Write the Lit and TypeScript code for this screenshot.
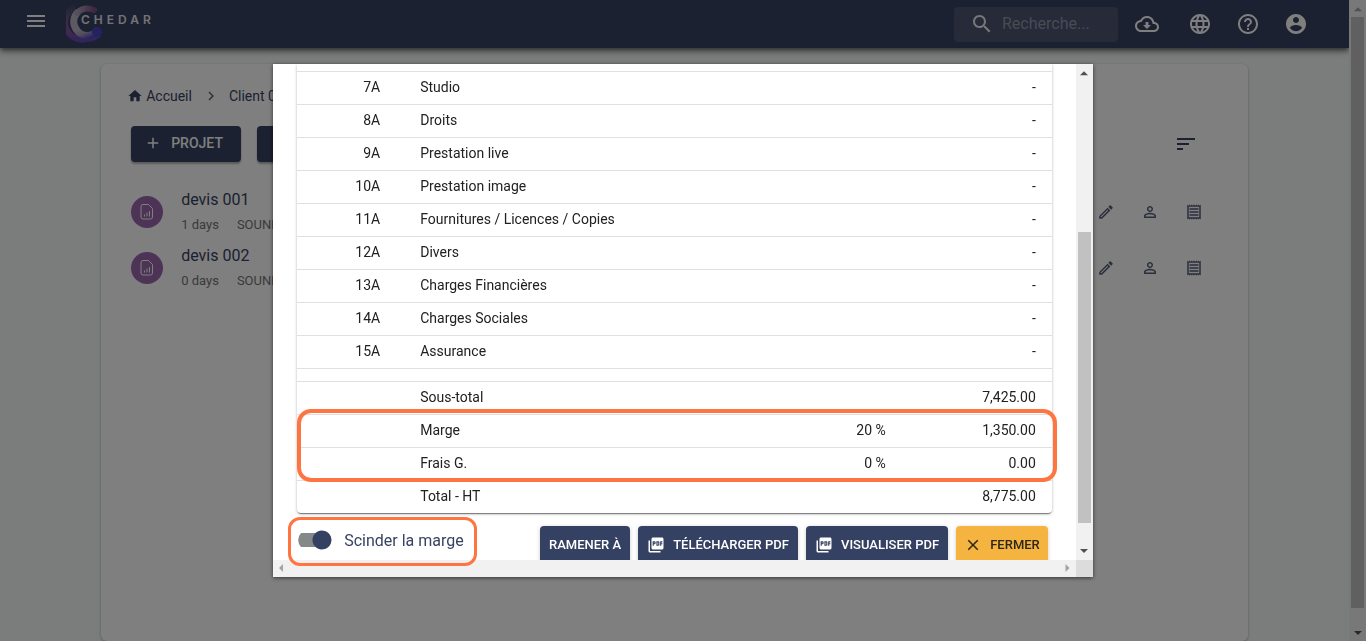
import { LitElement, html, css, svg } from "lit";
import { customElement, property } from "lit/decorators.js";

const ICONS: Record<string, string> = {
  menu: "M3,6H21V8H3V6M3,11H21V13H3V11M3,16H21V18H3V16Z",
  search: "M15.5 14h-.79l-.28-.27C15.41 12.59 16 11.11 16 9.5 16 5.91 13.09 3 9.5 3S3 5.91 3 9.5 5.91 16 9.5 16c1.61 0 3.09-.59 4.23-1.57l.27.28v.79l5 4.99L20.49 19l-4.99-5zm-6 0C7.01 14 5 11.99 5 9.5S7.01 5 9.5 5 14 7.01 14 9.5 11.99 14 9.5 14z",
  cloud: "M19.35 10.04C18.67 6.59 15.64 4 12 4 9.11 4 6.6 5.64 5.35 8.04 2.34 8.36 0 10.91 0 14c0 3.31 2.69 6 6 6h13c2.76 0 5-2.24 5-5 0-2.64-2.05-4.78-4.65-4.96zM19 18H6c-2.21 0-4-1.79-4-4 0-2.05 1.53-3.76 3.56-3.97l1.07-.11.5-.95C8.08 7.14 9.94 6 12 6c2.62 0 4.88 1.86 5.39 4.43l.3 1.5 1.53.11c1.56.1 2.78 1.41 2.78 2.96 0 1.65-1.35 3-3 3zm-5.55-8h-2.9v3H8l4 4 4-4h-2.55z",
  globe: "M11.99 2C6.47 2 2 6.48 2 12s4.47 10 9.99 10C17.52 22 22 17.52 22 12S17.52 2 11.99 2zm6.93 6h-2.95c-.32-1.25-.78-2.45-1.38-3.56 1.84.63 3.37 1.91 4.33 3.56zM12 4.04c.83 1.2 1.48 2.53 1.91 3.96h-3.82c.43-1.43 1.08-2.76 1.91-3.96zM4.26 14C4.1 13.36 4 12.69 4 12s.1-1.36.26-2h3.38c-.08.66-.14 1.32-.14 2s.06 1.34.14 2H4.26zm.82 2h2.95c.32 1.25.78 2.45 1.38 3.56-1.84-.63-3.37-1.9-4.33-3.56zm2.95-8H5.08c.96-1.66 2.49-2.93 4.33-3.56C8.81 5.55 8.35 6.75 8.03 8zM12 19.96c-.83-1.2-1.48-2.53-1.91-3.96h3.82c-.43 1.43-1.08 2.76-1.91 3.96zM14.34 14H9.66c-.09-.66-.16-1.32-.16-2s.07-1.35.16-2h4.68c.09.65.16 1.32.16 2s-.07 1.34-.16 2zm.25 5.56c.6-1.11 1.06-2.31 1.38-3.56h2.95c-.96 1.65-2.49 2.93-4.33 3.56zM16.36 14c.08-.66.14-1.32.14-2s-.06-1.34-.14-2h3.38c.16.64.26 1.31.26 2s-.1 1.36-.26 2h-3.38z",
  help: "M11 18h2v-2h-2v2zm1-16C6.48 2 2 6.48 2 12s4.48 10 10 10 10-4.48 10-10S17.52 2 12 2zm0 18c-4.41 0-8-3.59-8-8s3.59-8 8-8 8 3.59 8 8-3.59 8-8 8zm0-14c-2.21 0-4 1.79-4 4h2c0-1.1.9-2 2-2s2 .9 2 2c0 2-3 1.75-3 5h2c0-2.25 3-2.5 3-5 0-2.21-1.79-4-4-4z",
  account: "M12 2C6.48 2 2 6.48 2 12s4.48 10 10 10 10-4.48 10-10S17.52 2 12 2zm0 3c1.66 0 3 1.34 3 3s-1.34 3-3 3-3-1.34-3-3 1.34-3 3-3zm0 14.2c-2.5 0-4.71-1.28-6-3.22.03-1.99 4-3.08 6-3.08 1.99 0 5.97 1.09 6 3.08-1.29 1.94-3.5 3.22-6 3.22z",
  home: "M10 20v-6h4v6h5v-8h3L12 3 2 12h3v8z",
  chevron: "M10 6L8.59 7.41 13.17 12l-4.58 4.59L10 18l6-6z",
  add: "M19 13h-6v6h-2v-6H5v-2h6V5h2v6h6v2z",
  sort: "M3 18h6v-2H3v2zM3 6v2h18V6H3zm0 7h12v-2H3v2z",
  edit: "M14.06 9.02l.92.92L5.92 19H5v-.92l9.06-9.06M17.66 3c-.25 0-.51.1-.7.29l-1.83 1.83 3.75 3.75 1.83-1.83c.39-.39.39-1.02 0-1.41l-2.34-2.34c-.2-.2-.45-.29-.71-.29zm-3.6 3.19L3 17.25V21h3.75L17.81 9.94l-3.75-3.75z",
  person: "M12 5.9c1.16 0 2.1.94 2.1 2.1s-.94 2.1-2.1 2.1S9.9 9.16 9.9 8s.94-2.1 2.1-2.1m0 9c2.97 0 6.1 1.46 6.1 2.1v1.1H5.9V17c0-.64 3.13-2.1 6.1-2.1M12 4C9.79 4 8 5.79 8 8s1.79 4 4 4 4-1.79 4-4-1.79-4-4-4zm0 9c-2.67 0-8 1.34-8 4v3h16v-3c0-2.66-5.33-4-8-4z",
  receipt: "M19.5 3.5L18 2l-1.5 1.5L15 2l-1.5 1.5L12 2l-1.5 1.5L9 2 7.5 3.5 6 2 4.5 3.5 3 2v20l1.5-1.5L6 22l1.5-1.5L9 22l1.5-1.5L12 22l1.5-1.5L15 22l1.5-1.5L18 22l1.5-1.5L21 22V2l-1.5 1.5zM19 19.09H5V4.91h14v14.18zM6 15h12v2H6zm0-4h12v2H6zm0-4h12v2H6z",
  pdf: "M20 2H8c-1.1 0-2 .9-2 2v12c0 1.1.9 2 2 2h12c1.1 0 2-.9 2-2V4c0-1.1-.9-2-2-2zm-8.5 7.5c0 .83-.67 1.5-1.5 1.5H9v2H7.5V7H10c.83 0 1.5.67 1.5 1.5v1zm5 2c0 .83-.67 1.5-1.5 1.5h-2.5V7H15c.83 0 1.5.67 1.5 1.5v3zm4-3H19v1h1.5V11H19v2h-1.5V7h3v1.5zM9 9.5h1v-1H9v1zM4 6H2v14c0 1.1.9 2 2 2h14v-2H4V6zm10 5.5h1v-3h-1v3z",
  close: "M19 6.41L17.59 5 12 10.59 6.41 5 5 6.41 10.59 12 5 17.59 6.41 19 12 13.41 17.59 19 19 17.59 13.41 12z",
  up: "M12 8.500L20 16.500H4z",
  down: "M12 16L4 8h16z",
  left: "M6 12L14 4v16z",
  right: "M17 12L9 4v16z",
};

const icon = (name: string, size = 24) => html`<svg
  width=${size} height=${size} viewBox="0 0 24 24" fill="currentColor" aria-hidden="true"
>${svg`<path d=${ICONS[name]}></path>`}</svg>`;

const base = css`
  * { box-sizing: border-box; }
  svg { display: block; flex: none; }
  button {
    font: inherit;
    color: inherit;
    border: 0;
    padding: 0;
    background: none;
    display: flex;
    align-items: center;
    justify-content: center;
  }
  a { color: inherit; text-decoration: none; }
`;

@customElement("scroll-bar")
export class ScrollBar extends LitElement {
  @property({ type: Boolean, reflect: true }) horizontal = false;
  /** Shares of the track that lie before, on and after the thumb. */
  @property({ type: Array }) parts: number[] = [];
  @property({ type: Boolean }) atStart = false;

  static styles = [base, css`
    :host { display: flex; flex-direction: column; width: 17px; background: #f1f1f1; color: #505050; }
    :host([horizontal]) { flex-direction: row; width: auto; height: 17px; color: #a3a3a3; }
    .arrow { width: 17px; height: 17px; flex: none; display: flex; align-items: center; justify-content: center; }
    .faint { color: #a3a3a3; }
    .track { flex: 1; display: flex; flex-direction: column; padding: 0 2px; }
    .thumb { background: #c1c1c1; }
  `];

  render() {
    const [before, thumb, after] = this.parts;
    return html`
      <span class="arrow ${this.atStart ? "faint" : ""}">${icon(this.horizontal ? "left" : "up", 12)}</span>
      <div class="track">
        ${this.parts.length
          ? html`<div style="flex:${before}"></div><div class="thumb" style="flex:${thumb}"></div><div style="flex:${after}"></div>`
          : ""}
      </div>
      <span class="arrow">${icon(this.horizontal ? "right" : "down", 12)}</span>
    `;
  }
}

@customElement("app-header")
export class AppHeader extends LitElement {
  static styles = [base, css`
    :host {
      display: flex;
      align-items: center;
      height: 48px;
      padding: 0 41px 0 24px;
      background: #384262;
      color: #fff;
      box-shadow: 0 2px 4px -1px rgba(0,0,0,.4), 0 4px 5px rgba(0,0,0,.28), 0 1px 10px rgba(0,0,0,.24);
    }
    .menu { padding-bottom: 6px; }
    .brand { display: flex; align-items: flex-start; margin-left: 18px; height: 42px; }
    .search {
      display: flex;
      align-items: center;
      gap: 8px;
      width: 164px;
      height: 35px;
      margin: 0 17px 0 auto;
      padding-left: 16px;
      border-radius: 4px;
      background: rgba(255,255,255,.1);
    }
    .search input {
      flex: 1;
      min-width: 0;
      border: 0;
      padding: 0;
      outline: 0;
      background: none;
      color: #fff;
      font: 16px/24px Roboto, sans-serif;
    }
    .search input::placeholder { color: #9297a7; opacity: 1; }
    .search svg { opacity: .9; }
    .actions { display: flex; gap: 24px; }
    .cloud { margin-right: 5px; }
    .letters { font: 600 12px Inter, sans-serif; letter-spacing: 4px; fill: #e4e6ec; }
  `];

  render() {
    return html`
      <button class="menu" aria-label="Menu">${icon("menu")}</button>
      <a class="brand" href="#" aria-label="Chedar">
        <svg width="100" height="40" viewBox="0 0 100 40" fill="none">
          <defs>
            <linearGradient id="outer" x1="0" y1="0" x2="0" y2="1">
              <stop offset="0" stop-color="#6c6680" stop-opacity=".2"></stop>
              <stop offset=".45" stop-color="#7d5690"></stop>
              <stop offset=".8" stop-color="#8052a0"></stop>
              <stop offset="1" stop-color="#604cb0"></stop>
            </linearGradient>
            <linearGradient id="inner" x1="0" y1=".2" x2="1" y2="1">
              <stop offset="0" stop-color="#b9b2c4"></stop>
              <stop offset=".45" stop-color="#a99bbb"></stop>
              <stop offset="1" stop-color="#4e44c4"></stop>
            </linearGradient>
            <linearGradient id="tip" x1="0" y1="0" x2="1" y2="0">
              <stop offset="0" stop-color="#aba3b8"></stop>
              <stop offset="1" stop-color="#7f4f86"></stop>
            </linearGradient>
          </defs>
          <path d="M9 4A17 17 0 0 0 20 36Q28 36 33 31" stroke="url(#outer)" stroke-width="6"></path>
          <path d="M10 26A13 13 0 0 0 31 28" stroke="url(#inner)" stroke-width="7" stroke-linecap="round"></path>
          <path d="M10 26A13 13 0 0 1 11 10" stroke="#b9b2c4" stroke-width="7" stroke-linecap="round"></path>
          <path d="M11 10Q18 3 28 7" stroke="url(#tip)" stroke-width="6" stroke-linecap="round"></path>
          <circle cx="31" cy="29" r="5" fill="#4c42c0"></circle>
          <text class="letters" x="15" y="21">CHEDAR</text>
        </svg>
      </a>
      <label class="search">${icon("search")}<input type="text" placeholder="Recherche..." aria-label="Recherche" /></label>
      <nav class="actions">
        <button class="cloud" aria-label="Télécharger">${icon("cloud")}</button>
        <button aria-label="Langue">${icon("globe")}</button>
        <button aria-label="Aide">${icon("help")}</button>
        <button aria-label="Compte">${icon("account")}</button>
      </nav>
    `;
  }
}

const PROJECTS = [
  { name: "devis 001", days: "1 days", tag: "SOUND" },
  { name: "devis 002", days: "0 days", tag: "SOUND" },
];

@customElement("project-list")
export class ProjectList extends LitElement {
  static styles = [base, css`
    :host {
      display: block;
      width: 85%;
      margin: 16px auto 0;
      padding: 20px 30px 0;
      background: #fff;
      border-radius: 6px;
      box-shadow: 0 1px 3px rgba(0,0,0,.3);
      color: #384262;
    }
    .crumbs { display: flex; align-items: center; height: 24px; margin-left: -4px; font-size: 14px; line-height: 24px; }
    .crumbs a { display: flex; align-items: center; gap: 3px; }
    .crumbs .sep { margin: 0 9px 0 10px; color: #666; }
    .bar { display: flex; align-items: center; gap: 16px; margin-top: 18px; height: 36px; }
    .primary {
      height: 36px;
      width: 110px;
      gap: 9px;
      justify-content: flex-start;
      padding: 0 0 2px 13px;
      border-radius: 4px;
      background: #384262;
      color: #fff;
      font-size: 14px;
      font-weight: 500;
      box-shadow: 0 2px 2px rgba(0,0,0,.3);
    }
    .sort { margin: 0 20px 0 auto; }
    ul { list-style: none; margin: 22px 0 0; padding: 0; }
    li { display: flex; align-items: center; gap: 18px; height: 56px; }
    .badge {
      width: 32px;
      height: 32px;
      border-radius: 50%;
      background: #9a68ae;
      color: #fff;
      display: flex;
      align-items: center;
      justify-content: center;
    }
    .name { display: block; font-size: 16px; line-height: 24px; }
    .meta { display: flex; gap: 18px; font-size: 13px; line-height: 26px; color: #757575; }
    .text { padding-top: 2px; }
    .tools { display: flex; gap: 26px; margin: 0 15px 0 auto; opacity: .85; }
  `];

  render() {
    return html`
      <nav class="crumbs">
        <a href="#">${icon("home", 16)}Accueil</a>
        <span class="sep">${icon("chevron", 18)}</span>
        <a href="#">Client 001</a>
      </nav>
      <div class="bar">
        <button class="primary">${icon("add", 18)}PROJET</button>
        <button class="primary">${icon("add", 18)}CLIENT</button>
        <button class="sort" aria-label="Trier">${icon("sort")}</button>
      </div>
      <ul>
        ${PROJECTS.map((p) => html`
          <li>
            <span class="badge">
              <svg width="14" height="18" viewBox="0 0 14 18" fill="none" stroke="currentColor">
                <path d="M3 1.5h5.5l4 4V14a2 2 0 0 1-2 2H3a2 2 0 0 1-2-2V3.500a2 2 0 0 1 2-2z"></path>
                <path d="M4.500 13.500v-2M7 13.500v-4M9.500 13.500v-5.500"></path>
              </svg>
            </span>
            <div class="text">
              <a class="name" href="#">${p.name}</a>
              <span class="meta"><span>${p.days}</span><span>${p.tag}</span></span>
            </div>
            <div class="tools">
              <button aria-label="Modifier">${icon("edit", 18)}</button>
              <button aria-label="Client">${icon("person", 18)}</button>
              <button aria-label="Devis">${icon("receipt", 18)}</button>
            </div>
          </li>`)}
      </ul>
    `;
  }
}

const LINES = [
  ["7A", "Studio"],
  ["8A", "Droits"],
  ["9A", "Prestation live"],
  ["10A", "Prestation image"],
  ["11A", "Fournitures / Licences / Copies"],
  ["12A", "Divers"],
  ["13A", "Charges Financières"],
  ["14A", "Charges Sociales"],
  ["15A", "Assurance"],
];

const TOTALS = [
  ["Sous-total", "", "7,425.00"],
  ["Marge", "20 %", "1,350.00"],
  ["Frais G.", "0 %", "0.00"],
  ["Total - HT", "", "8,775.00"],
];

@customElement("quote-dialog")
export class QuoteDialog extends LitElement {
  static styles = [base, css`
    :host {
      position: relative;
      display: grid;
      grid-template: minmax(0, 1fr) 17px / minmax(0, 1fr) 17px;
      width: 60%;
      height: 80%;
      background: #fff;
      color: #212121;
      box-shadow: 0 1px 4px rgba(0,0,0,.6);
    }
    .view { overflow: hidden; padding: 0 24px; }
    .corner { background: #dcdcdc; }
    .sheet {
      border-radius: 0 0 4px 4px;
      box-shadow: 0 2px 1px -1px rgba(0,0,0,.4), 0 1px 3px rgba(0,0,0,.3);
    }
    table { width: 100%; border-collapse: collapse; table-layout: fixed; font-size: 14px; line-height: 20px; }
    td { height: 33px; padding: 0 16px 2px; border-bottom: 1px solid #e0e0e0; }
    tr:last-child td { border-bottom: 0; }
    .cut td { height: 7px; }
    .gap td { height: 13px; }
    .code { width: 99px; text-align: right; }
    .name { padding-left: 24px; }
    .rate { width: 140px; text-align: right; }
    .sum { width: 150px; text-align: right; }
    .footer { display: flex; align-items: flex-start; gap: 8px; padding: 13px 4px 0 0; }
    .switch { display: flex; align-items: center; gap: 12px; height: 28px; margin-right: auto; color: #384262; font-size: 16px; }
    .switch input {
      appearance: none;
      width: 35px;
      height: 20px;
      margin: 0;
      border-radius: 10px;
      background:
        radial-gradient(circle at 25px 10px, #354163 9px, transparent 10px),
        linear-gradient(#858888, #858888) 1px 3px / 30px 14px no-repeat;
      clip-path: inset(0 0 0 1px round 10px);
    }
    .footer button {
      height: 37px;
      padding: 0 9px;
      gap: 8px;
      border-radius: 4px 4px 0 0;
      background: #354163;
      color: #fff;
      font-size: 13px;
      font-weight: 500;
      white-space: nowrap;
      box-shadow: 0 1px 4px rgba(0,0,0,.2);
    }
    .footer .close { background: #f4b43f; color: #2b2618; padding: 0 8px; }
    .ring { position: absolute; border: 4px solid #ff7542; pointer-events: none; }
    .ring-margin { left: 24px; right: 36px; top: 345px; height: 73px; border-radius: 14px; }
    .ring-switch { left: 15px; width: 189px; top: 453px; height: 49px; border-width: 3px; border-radius: 12px; }
  `];

  render() {
    return html`
      <div class="view">
        <div class="sheet">
          <table>
            <tr class="cut"><td class="code"></td><td class="name"></td><td class="rate"></td><td class="sum"></td></tr>
            ${LINES.map(([code, name]) => html`
              <tr><td class="code">${code}</td><td class="name">${name}</td><td class="rate"></td><td class="sum">-</td></tr>`)}
            <tr class="gap"><td colspan="4"></td></tr>
            ${TOTALS.map(([name, rate, sum]) => html`
              <tr><td class="code"></td><td class="name">${name}</td><td class="rate">${rate}</td><td class="sum">${sum}</td></tr>`)}
          </table>
        </div>
        <div class="footer">
          <label class="switch"><input type="checkbox" role="switch" checked />Scinder la marge</label>
          <button>RAMENER À</button>
          <button>${icon("pdf", 18)}TÉLÉCHARGER PDF</button>
          <button>${icon("pdf", 18)}VISUALISER PDF</button>
          <button class="close">${icon("close", 18)}FERMER</button>
        </div>
      </div>
      <scroll-bar .parts=${[151, 291, 20]}></scroll-bar>
      <scroll-bar horizontal></scroll-bar>
      <div class="corner"></div>
      <div class="ring ring-margin"></div>
      <div class="ring ring-switch"></div>
    `;
  }
}

@customElement("app-root")
export class AppRoot extends LitElement {
  static styles = [base, css`
    :host {
      display: flex;
      height: 100vh;
      overflow: hidden;
      font-family: Roboto, sans-serif;
      background: #f7fbf9;
    }
    .page { flex: 1; min-width: 0; display: flex; flex-direction: column; }
    project-list { flex: 1; }
    .overlay {
      position: fixed;
      inset: 0;
      display: flex;
      align-items: center;
      justify-content: center;
      background: rgba(0,0,0,.5);
    }
  `];

  render() {
    return html`
      <div class="page">
        <app-header></app-header>
        <project-list></project-list>
      </div>
      <scroll-bar .atStart=${true} .parts=${[0, 591, 16]}></scroll-bar>
      <div class="overlay"><quote-dialog></quote-dialog></div>
    `;
  }
}
